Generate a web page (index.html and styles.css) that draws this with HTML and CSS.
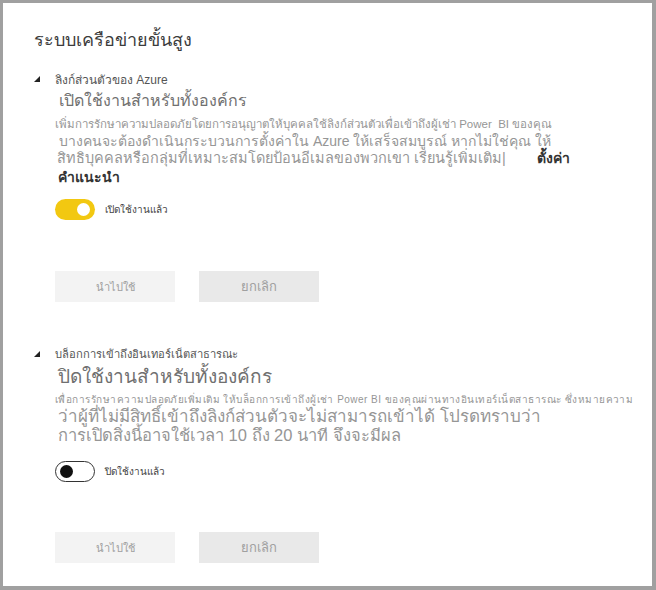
FILE: index.html
```html
<!DOCTYPE html>
<html lang="th">
<head>
<meta charset="utf-8">
<link rel="stylesheet" href="styles.css">
</head>
<body>
<div class="frame">
  <h1 class="title">ระบบเครือข่ายขั้นสูง</h1>

  <section class="setting">
    <div class="setting-head"><span class="tri"></span><span class="label">ลิงก์ส่วนตัวของ Azure</span></div>
    <div class="body">
      <div class="headline h1a">เปิดใช้งานสำหรับทั้งองค์กร</div>
      <div class="line s12 l1">เพิ่มการรักษาความปลอดภัยโดยการอนุญาตให้บุคคลใช้ลิงก์ส่วนตัวเพื่อเข้าถึงผู้เช่า Power&nbsp; BI ของคุณ</div>
      <div class="line s14 l2">บางคนจะต้องดำเนินกระบวนการตั้งค่าใน Azure ให้เสร็จสมบูรณ์ หากไม่ใช่คุณ ให้</div>
      <div class="line s15 l3"><span>สิทธิบุคคลหรือกลุ่มที่เหมาะสมโดยป้อนอีเมลของพวกเขา เรียนรู้เพิ่มเติม|</span><b class="setup">ตั้งค่า</b></div>
      <div class="line bold l4">คำแนะนำ</div>
      <div class="toggle-row">
        <span class="toggle on"><span class="knob"></span></span>
        <span class="toggle-label">เปิดใช้งานแล้ว</span>
      </div>
      <div class="buttons">
        <button class="btn apply">นำไปใช้</button>
        <button class="btn cancel">ยกเลิก</button>
      </div>
    </div>
  </section>

  <section class="setting second">
    <div class="setting-head"><span class="tri"></span><span class="label label2">บล็อกการเข้าถึงอินเทอร์เน็ตสาธารณะ</span></div>
    <div class="body">
      <div class="headline h2a">ปิดใช้งานสำหรับทั้งองค์กร</div>
      <div class="line s10 m1">เพื่อการรักษาความปลอดภัยเพิ่มเติม ให้บล็อกการเข้าถึงผู้เช่า Power BI ของคุณผ่านทางอินเทอร์เน็ตสาธารณะ ซึ่งหมายความ</div>
      <div class="line s17 m2">ว่าผู้ที่ไม่มีสิทธิ์เข้าถึงลิงก์ส่วนตัวจะไม่สามารถเข้าได้ โปรดทราบว่า</div>
      <div class="line s16 m3">การเปิดสิ่งนี้อาจใช้เวลา 10 ถึง 20 นาที จึงจะมีผล</div>
      <div class="toggle-row off-row">
        <span class="toggle off"><span class="knob"></span></span>
        <span class="toggle-label">ปิดใช้งานแล้ว</span>
      </div>
      <div class="buttons buttons2">
        <button class="btn apply">นำไปใช้</button>
        <button class="btn cancel">ยกเลิก</button>
      </div>
    </div>
  </section>
</div>
</body>
</html>
```

FILE: styles.css
```css
* { box-sizing: border-box; }
html, body { margin: 0; padding: 0; }
body {
  width: 656px;
  height: 590px;
  font-family: Tahoma, "Liberation Sans", "Noto Sans", sans-serif;
  background: #a0a0a0;
}
.frame {
  width: 656px;
  height: 590px;
  background: #fff;
  border-style: solid;
  border-color: #a0a0a0;
  border-width: 3px 4px 4px 3px;
  padding: 24px 0 0 31px;
}
.title {
  margin: 0;
  font-size: 18px;
  font-weight: normal;
  line-height: 26px;
  color: #3c3c3c;
}
.setting { margin-top: 18px; }
.setting-head {
  display: flex;
  align-items: center;
  height: 16px;
}
.tri {
  width: 0;
  height: 0;
  border-left: 6px solid transparent;
  border-bottom: 6px solid #222;
  margin-right: 15px;
}
.label {
  font-size: 12px;
  color: #555;
}
.label2 { font-size: 11.2px; }
.body { padding-left: 21px; }
.headline {
  font-size: 16px;
  line-height: 28px;
  color: #707070;
  white-space: nowrap;
}
.h1a { padding-left: 4px; }
.h2a { font-size: 19px; line-height: 30px; padding-left: 3px; }
.line { white-space: nowrap; color: #969696; }
.s12 { font-size: 11.5px; line-height: 18px; }
.s14 { font-size: 14px; line-height: 17px; }
.s15 { font-size: 14.5px; line-height: 17px; }
.s10 { font-size: 10px; letter-spacing: 0.47px; line-height: 16px; }
.s17 { font-size: 17px; line-height: 18px; }
.s16 { font-size: 16.5px; line-height: 18px; }
.l2 { padding-left: 4px; }
.l3 { padding-left: 2px; display: flex; }
.setup {
  margin-left: auto;
  margin-right: 82px;
  font-size: 14px;
  color: #333;
  font-weight: bold;
  letter-spacing: 0;
}
.bold { font-weight: bold; font-size: 14px; color: #333; padding-left: 3px; line-height: 20px; }
.m2, .m3 { padding-left: 3px; }
.toggle-row {
  display: flex;
  align-items: center;
  margin-top: 12px;
  height: 21px;
}
.toggle {
  position: relative;
  width: 40px;
  height: 21px;
  border-radius: 11px;
  display: inline-block;
}
.toggle.on { background: #f2c811; }
.toggle.off { background: #fff; border: 1px solid #333; }
.knob {
  position: absolute;
  top: 4px;
  width: 13px;
  height: 13px;
  border-radius: 50%;
}
.on .knob { right: 5px; background: #fff; }
.off .knob { left: 4px; top: 3px; background: #111; }
.toggle-label {
  font-size: 10px;
  color: #444;
  margin-left: 10px;
}
.buttons {
  display: flex;
  gap: 24px;
  margin-top: 51px;
}
.btn {
  width: 120px;
  height: 31px;
  border: none;
  font-family: inherit;
  font-size: 11px;
  color: #a0a0a0;
  padding: 0;
}
.apply { background: #f3f3f3; }
.cancel { background: #e9e9e9; font-size: 13px; }
.second { margin-top: 44px; }
.off-row { margin-top: 17px; }
.buttons2 { margin-top: 50px; }
```
